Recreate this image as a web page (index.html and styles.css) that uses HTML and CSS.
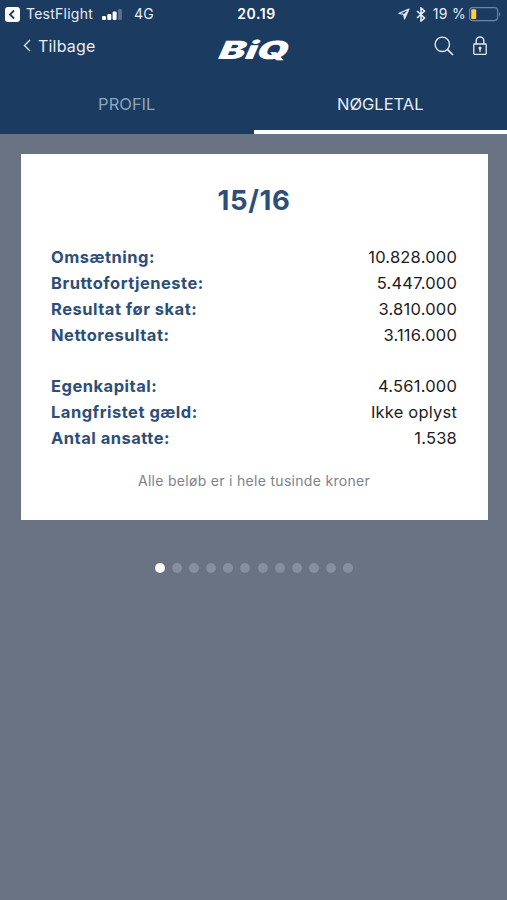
FILE: index.html
```html
<!DOCTYPE html>
<html lang="da">
<head>
    <meta charset="UTF-8">
    <meta name="viewport" content="width=device-width, initial-scale=1.0">
    <title>BiQ - Nøgletal</title>
    <link rel="stylesheet" href="styles.css">
</head>
<body>
    <header>
        <!-- Status bar -->
        <div class="status-bar">
            <div class="status-left">
                <svg class="back-app" width="15" height="15" viewBox="0 0 15 15">
                    <rect width="15" height="15" rx="3" fill="#fff"/>
                    <path d="M9 3.5L5 7.5l4 4" fill="none" stroke="#1b3b61" stroke-width="1.8"/>
                </svg>
                <span class="app-name">TestFlight</span>
                <svg class="signal" width="20" height="11" viewBox="0 0 20 11">
                    <rect x="0" y="7" width="4" height="4" rx="1" fill="#fff"/>
                    <rect x="5.3" y="5" width="4" height="6" rx="1" fill="#fff"/>
                    <rect x="10.6" y="2.5" width="4" height="8.5" rx="1" fill="#fff"/>
                    <rect x="15.9" y="0" width="4" height="11" rx="1" fill="#56708f"/>
                </svg>
                <span class="network">4G</span>
            </div>
            <span class="clock">20.19</span>
            <div class="status-right">
                <svg class="location" width="12" height="12" viewBox="0 0 12 12">
                    <path d="M11 1L1 5.4l4.7.9.8 4.7z" fill="none" stroke="#dce5ef" stroke-width="1.2" stroke-linejoin="round"/>
                    <path d="M11 1L5.7 6.3l.8 4.7z" fill="#dce5ef"/>
                </svg>
                <svg class="bluetooth" width="10" height="15" viewBox="0 0 10 15">
                    <path d="M1 4l7.5 7L5 14V1l3.5 3L1 11" fill="none" stroke="#e6edf5" stroke-width="1.6"/>
                </svg>
                <span class="percent">19 %</span>
                <svg class="battery" width="32" height="15" viewBox="0 0 32 15">
                    <rect x=".6" y=".6" width="28" height="13" rx="3" fill="none" stroke="#6f87a2" stroke-width="1.1"/>
                    <rect x="2.2" y="2.3" width="5" height="9.6" rx="1" fill="#ffce3d"/>
                    <path d="M30 5c1.6.7 1.6 3.8 0 4.5z" fill="#6f87a2"/>
                </svg>
            </div>
        </div>

        <!-- Navbar -->
        <nav>
            <a class="back">
                <svg width="8" height="13" viewBox="0 0 8 13">
                    <path d="M7 1L1.5 6.5 7 12" fill="none" stroke="#dfe7f0" stroke-width="1.4"/>
                </svg>
                Tilbage
            </a>
            <div class="logo"><span>BiQ</span></div>
            <div class="nav-icons">
                <svg width="20" height="20" viewBox="0 0 20 20">
                    <circle cx="8.3" cy="8.3" r="7.2" fill="none" stroke="#e3ebf3" stroke-width="1.4"/>
                    <path d="M13.4 13.4l5.6 5.6" stroke="#e3ebf3" stroke-width="1.7"/>
                </svg>
                <svg width="14" height="20" viewBox="0 0 14 20">
                    <rect x=".8" y="8" width="12.4" height="10.4" rx=".8" fill="none" stroke="#e3ebf3" stroke-width="1.3"/>
                    <path d="M3.2 8V4.8a3.8 3.8 0 0 1 7.6 0V8" fill="none" stroke="#e3ebf3" stroke-width="1.4"/>
                    <circle cx="7" cy="12" r="1.5" fill="#e3ebf3"/>
                    <path d="M7 12v4" stroke="#e3ebf3" stroke-width="1.3"/>
                </svg>
            </div>
        </nav>

        <!-- Tabs -->
        <div class="tabs">
            <div class="tab">PROFIL</div>
            <div class="tab active">NØGLETAL</div>
        </div>
    </header>

    <!-- Key figures -->
    <main>
        <section class="card">
            <h1>15/16</h1>
            <dl>
                <div class="row"><dt>Omsætning:</dt><dd>10.828.000</dd></div>
                <div class="row"><dt>Bruttofortjeneste:</dt><dd>5.447.000</dd></div>
                <div class="row"><dt>Resultat før skat:</dt><dd>3.810.000</dd></div>
                <div class="row"><dt>Nettoresultat:</dt><dd>3.116.000</dd></div>
            </dl>
            <dl>
                <div class="row"><dt>Egenkapital:</dt><dd>4.561.000</dd></div>
                <div class="row"><dt>Langfristet gæld:</dt><dd>Ikke oplyst</dd></div>
                <div class="row"><dt>Antal ansatte:</dt><dd>1.538</dd></div>
            </dl>
            <p class="note">Alle beløb er i hele tusinde kroner</p>
        </section>

        <div class="dots">
            <i class="current"></i><i></i><i></i><i></i><i></i><i></i>
            <i></i><i></i><i></i><i></i><i></i><i></i>
        </div>
    </main>
</body>
</html>
```

FILE: styles.css
```css
* {
    box-sizing: border-box;
}

body {
    margin: 0;
    min-height: 900px;
    background-color: #6a7383;
    font-family: Inter, "Liberation Sans", sans-serif;
    color: #1c1c1e;
}

header {
    height: 134px;
    background-color: #1b3b61;
    color: #e6edf5;
}

/* Status bar */
.status-bar {
    display: grid;
    grid-template-columns: 1fr auto 1fr;
    align-items: center;
    height: 28px;
    padding: 0 6px 0 5px;
    font-size: 14px;
    line-height: 28px;
}

.status-left,
.status-right {
    display: flex;
    align-items: center;
}

.status-right {
    justify-content: flex-end;
}

.app-name {
    margin-left: 6px;
    letter-spacing: 0.25px;
}

.signal {
    margin-left: 9px;
}

.network {
    margin-left: 12px;
    letter-spacing: 0.2px;
}

.clock {
    padding-left: 7px;
    font-weight: 600;
    color: #fff;
    letter-spacing: 0.6px;
}

.bluetooth {
    margin-left: 6px;
}

.percent {
    margin-left: 7px;
    letter-spacing: 0.3px;
}

.battery {
    margin-left: 3px;
}

/* Navbar */
nav {
    display: grid;
    grid-template-columns: 1fr auto 1fr;
    align-items: center;
    height: 35px;
    padding: 0 20px 0 23px;
}

.back {
    display: flex;
    align-items: center;
    gap: 7px;
    font-size: 16px;
    letter-spacing: 0.2px;
}

.logo {
    width: 72px;
    padding-top: 8px;
    text-align: center;
    font-size: 25px;
    font-weight: 900;
    line-height: 26px;
    color: #fff;
}

.logo span {
    display: inline-block;
    transform: skewX(-24deg) scaleX(1.58);
}

.nav-icons {
    display: flex;
    justify-content: flex-end;
    gap: 19px;
}

/* Tabs */
.tabs {
    display: flex;
    height: 71px;
}

.tab {
    flex: 1;
    padding-top: 11px;
    text-align: center;
    font-size: 16.5px;
    line-height: 60px;
    color: #8ba5bd;
    border-bottom: 4px solid transparent;
}

.tab.active {
    color: #e6edf5;
    border-bottom-color: #fff;
}

/* Card */
main {
    padding: 20px 19px 0 21px;
}

.card {
    height: 366px;
    padding: 29px 31px 0 30px;
    background-color: #fff;
}

h1 {
    margin: 0 0 27px;
    text-align: center;
    font-size: 27.5px;
    font-weight: 650;
    letter-spacing: 0.6px;
    line-height: 34px;
    color: #2c4e78;
}

dl {
    margin: 0 0 24px;
}

.row {
    display: flex;
    justify-content: space-between;
    font-size: 16.5px;
    line-height: 26.15px;
}

dt {
    font-weight: 650;
    letter-spacing: 0.5px;
    color: #2c4e78;
}

dd {
    margin: 0;
    letter-spacing: 0.2px;
}

.note {
    margin: -7px 0 0;
    text-align: center;
    font-size: 14px;
    letter-spacing: 0.3px;
    line-height: 26px;
    color: #7d828c;
}

/* Page dots */
.dots {
    display: flex;
    justify-content: center;
    gap: 7.1px;
    margin: 43px 1px 0 0;
}

.dots i {
    width: 10px;
    height: 10px;
    border-radius: 50%;
    background-color: #868f9e;
}

.dots .current {
    background-color: #fff;
}
```
